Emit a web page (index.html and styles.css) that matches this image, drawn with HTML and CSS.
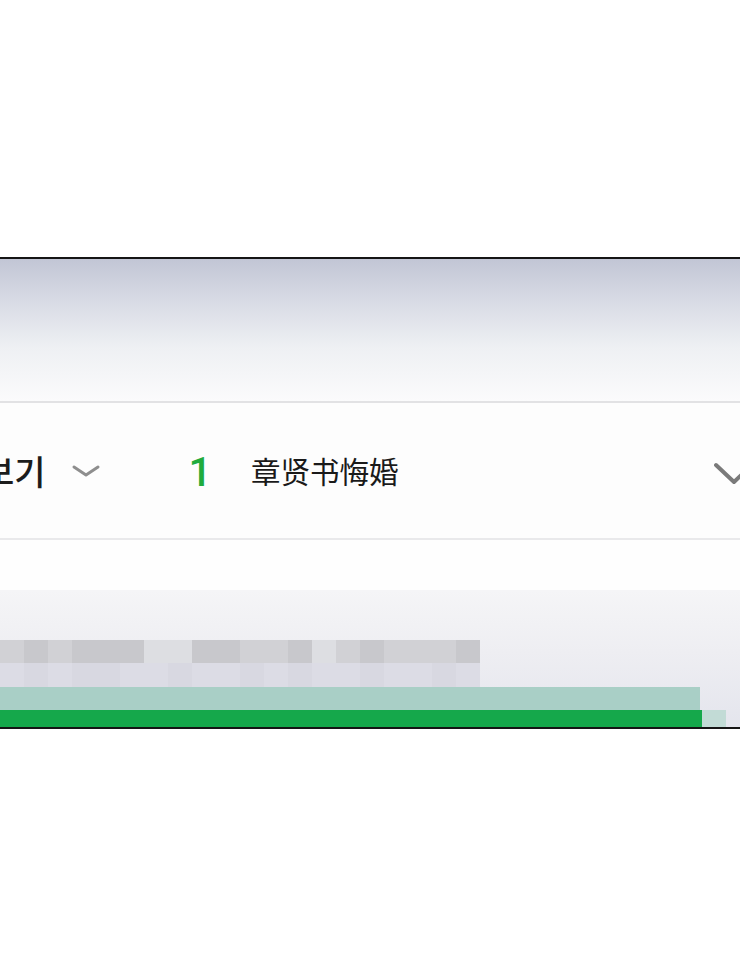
FILE: index.html
```html
<!DOCTYPE html>
<html lang="ko">
<head>
    <meta charset="UTF-8">
    <meta name="viewport" content="width=device-width, initial-scale=1.0">
    <title>보기</title>
    <link rel="stylesheet" href="styles.css">
</head>
<body>

    <div class="frame">
        <div class="hero"></div>

        <div class="episode-bar">
            <span class="view-label">보기</span>
            <svg class="chevron-small" width="28" height="14" viewBox="0 0 28 14">
                <path d="M2 3 L14 11 L26 3" fill="none" stroke="#8e8e8e" stroke-width="3" stroke-linecap="round" stroke-linejoin="round"/>
            </svg>
            <span class="episode-no">1</span>
            <span class="episode-title">章贤书悔婚</span>
            <svg class="chevron-large" width="44" height="26" viewBox="0 0 44 26">
                <path d="M4 4 L22 21 L40 4" fill="none" stroke="#7a7a7a" stroke-width="4" stroke-linecap="round" stroke-linejoin="round"/>
            </svg>
        </div>

        <div class="spacer"></div>

        <div class="blurred">
            <div class="blur-row dark">
                <span class="px s2"></span><span class="px s1"></span><span class="px s2"></span><span class="px s1"></span><span class="px s1"></span>
                <span class="px s1"></span><span class="px s3"></span><span class="px s3"></span><span class="px s1"></span><span class="px s1"></span>
                <span class="px s2"></span><span class="px s2"></span><span class="px s1"></span><span class="px s3"></span><span class="px s2"></span>
                <span class="px s1"></span><span class="px s2"></span><span class="px s2"></span><span class="px s2"></span><span class="px s1"></span>
            </div>
            <div class="blur-row light">
                <span class="px l1"></span><span class="px l2"></span><span class="px l1"></span><span class="px l2"></span><span class="px l2"></span>
                <span class="px l1"></span><span class="px l1"></span><span class="px l2"></span><span class="px l1"></span><span class="px l1"></span>
                <span class="px l2"></span><span class="px l1"></span><span class="px l2"></span><span class="px l1"></span><span class="px l1"></span>
                <span class="px l2"></span><span class="px l1"></span><span class="px l1"></span><span class="px l2"></span><span class="px l1"></span>
            </div>
            <div class="teal-band"></div>
            <div class="progress">
                <div class="progress-fill"></div>
                <div class="progress-tail"></div>
            </div>
        </div>
    </div>

</body>
</html>
```

FILE: styles.css
```css
body {
    margin: 0;
    background-color: #fff;
    font-family: "Noto Sans CJK KR", "Noto Sans CJK SC", sans-serif;
    overflow: hidden;
}
.frame {
    margin-top: 257px;
    border-top: 2px solid #151515;
    border-bottom: 2px solid #151515;
    overflow: hidden;
}
.hero {
    height: 142px;
    background: linear-gradient(to bottom, #c2c6d5 0%, #d8dbe5 30%, #eef0f3 62%, #fbfbfc 100%);
    border-bottom: 2px solid #e2e2e4;
}
.episode-bar {
    height: 135px;
    display: flex;
    align-items: center;
    background-color: #fdfdfd;
    border-bottom: 2px solid #e9e9eb;
    white-space: nowrap;
}
.view-label {
    margin-left: -17px;
    font-size: 34px;
    font-weight: 500;
    color: #1c1c1c;
    line-height: 1;
}
.chevron-small {
    margin-left: 26px;
    flex-shrink: 0;
}
.episode-no {
    margin-left: 89px;
    font-family: Roboto, "Liberation Sans", sans-serif;
    font-size: 41px;
    font-weight: 500;
    color: #20ab3c;
    line-height: 1;
    padding-top: 4px;
}
.episode-title {
    margin-left: 39px;
    font-family: "Noto Sans CJK SC", sans-serif;
    font-size: 29.5px;
    color: #1a1a1a;
    line-height: 1;
}
.chevron-large {
    margin-left: auto;
    margin-right: -16px;
    margin-top: 6px;
    flex-shrink: 0;
}
.spacer {
    height: 50px;
    background-color: #fefefe;
}
.blurred {
    background: linear-gradient(to bottom, #f5f5f7 0%, #eeeef2 45%, #e4e5ed 100%);
    padding-top: 50px;
}
.blur-row {
    display: flex;
    height: 23px;
}
.blur-row.light {
    height: 24px;
}
.px {
    width: 24px;
    flex-shrink: 0;
}
.s1 { background-color: #c8c8cc; }
.s2 { background-color: #d1d1d5; }
.s3 { background-color: #dddee2; }
.l1 { background-color: #dcdce5; }
.l2 { background-color: #d8d8e1; }
.teal-band {
    width: 700px;
    height: 23px;
    background-color: #a9cfc6;
}
.progress {
    display: flex;
    height: 17px;
}
.progress-fill {
    width: 702px;
    background-color: #15a84b;
}
.progress-tail {
    width: 24px;
    background-color: #c2dbd6;
}
```
